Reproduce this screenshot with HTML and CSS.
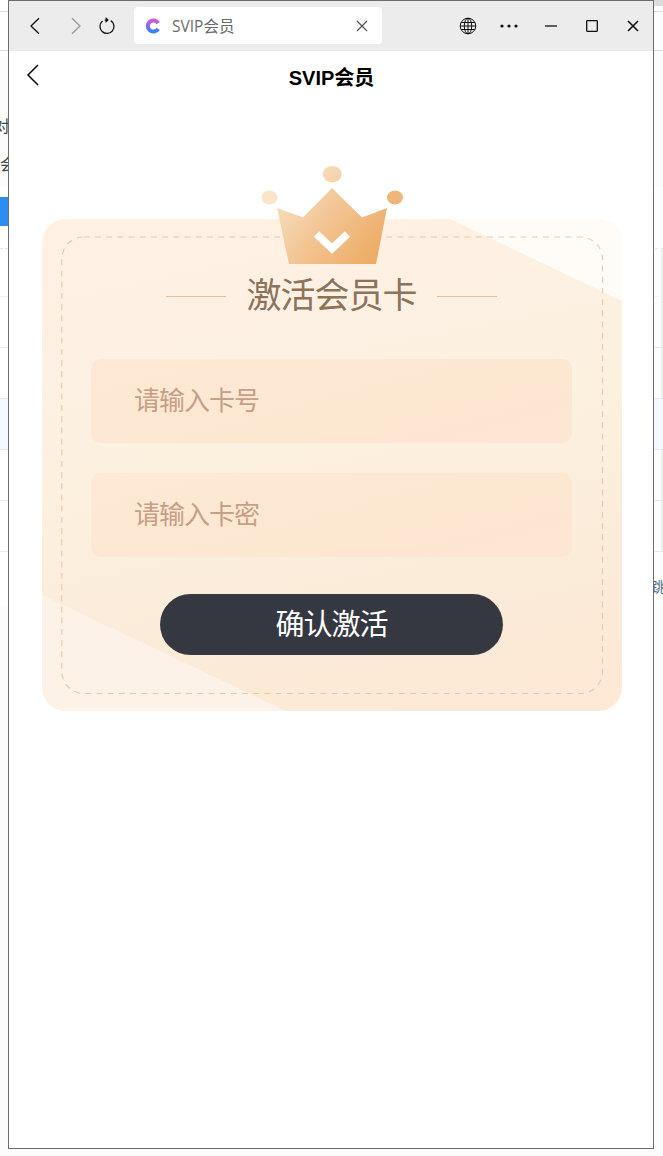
FILE: index.html
```
<!DOCTYPE html>
<html lang="zh-CN">
<head>
    <meta charset="UTF-8">
    <title>SVIP会员</title>
    <link rel="stylesheet" href="styles.css">
</head>
<body>
    <!-- Page behind the window -->
    <div class="backdrop">
        <div class="back-tabs"><span></span></div>
        <div class="back-nav"></div>
        <div class="back-info">
            <p class="cut">对</p>
            <p>会</p>
        </div>
        <div class="back-action"><span></span></div>
        <div class="back-table">
            <div class="back-row first"></div>
            <div class="back-row"></div>
            <div class="back-row"></div>
            <div class="back-row active"></div>
            <div class="back-row"></div>
            <div class="back-row"></div>
        </div>
        <div class="back-pager">跳</div>
    </div>

    <div class="window">
        <header class="toolbar">
            <svg class="nav-icon back" width="12" height="18" viewBox="0 0 12 18"><path d="M10 1.3 2 9l8 7.7"/></svg>
            <svg class="nav-icon forward" width="12" height="18" viewBox="0 0 12 18"><path d="M2 1.3 10 9l-8 7.7"/></svg>
            <svg class="nav-icon reload" width="18" height="20" viewBox="0 0 18 20">
                <path d="M4.5 5.1A7 7 0 1 0 12.8 4.6M9 4.1H6.7"/>
                <path class="fill" d="M7.6 1 10.8 4 7.6 7z"/>
            </svg>
            <div class="tab">
                <svg class="logo" width="16" height="18" viewBox="0 0 16 18">
                    <defs>
                        <linearGradient id="logo" x1="0" y1="0" x2="0" y2="1">
                            <stop offset="0" stop-color="#cf58d8"/>
                            <stop offset=".5" stop-color="#8b68ef"/>
                            <stop offset="1" stop-color="#3483fa"/>
                        </linearGradient>
                    </defs>
                    <path d="M13.2 6.1A5.6 5.6 0 1 0 13.2 11.9" fill="none" stroke="url(#logo)" stroke-width="4"/>
                </svg>
                <span class="tab-title">SVIP会员</span>
                <svg class="tab-close" width="12" height="12" viewBox="0 0 12 12"><path d="M1 1l10 10M11 1 1 11"/></svg>
            </div>
            <div class="controls">
                <svg class="globe" width="18" height="18" viewBox="0 0 18 18">
                    <circle cx="9" cy="9" r="7.8"/>
                    <ellipse cx="9" cy="9" rx="3.7" ry="7.8"/>
                    <path d="M9 1v16M1 9h16M2.3 5.5h13.4M2.3 12.5h13.4"/>
                </svg>
                <svg class="dots" width="18" height="18" viewBox="0 0 18 18"><circle cx="2" cy="9" r="1.6"/><circle cx="9" cy="9" r="1.6"/><circle cx="16" cy="9" r="1.6"/></svg>
                <svg width="18" height="18" viewBox="0 0 18 18"><path d="M3 9h12"/></svg>
                <svg width="18" height="18" viewBox="0 0 18 18"><rect x="3.7" y="3.7" width="10.6" height="10.6" rx=".5"/></svg>
                <svg class="close" width="18" height="18" viewBox="0 0 18 18"><path d="M4 4l10 10M14 4 4 14"/></svg>
            </div>
        </header>

        <div class="page-head">
            <svg width="14" height="22" viewBox="0 0 14 22"><path d="M12 1 2 11l10 10"/></svg>
            <h1>SVIP会员</h1>
        </div>

        <main class="card">
            <svg class="card-bg" width="580" height="492" viewBox="0 0 580 492">
                <defs>
                    <linearGradient id="card" x1="0.38" y1="0" x2="0.62" y2="1">
                        <stop offset="0" stop-color="#fff1e4"/>
                        <stop offset=".22" stop-color="#fdf1e3"/>
                        <stop offset=".46" stop-color="#fcf0df"/>
                        <stop offset=".8" stop-color="#fbebd9"/>
                        <stop offset="1" stop-color="#fde9d5"/>
                    </linearGradient>
                </defs>
                <rect width="580" height="492" fill="url(#card)"/>
                <path d="M408 0H580V82z" fill="#fffcf7"/>
                <path d="M0 376 244 492H0z" fill="#fcf2e8"/>
                <rect x="19.8" y="18" width="540.7" height="456.5" rx="22" fill="none" stroke="#ecc8a7" stroke-width="1.1" stroke-dasharray="5.9 5.3"/>
            </svg>
            <svg class="crown" width="144" height="100" viewBox="0 0 144 100">
                <defs>
                    <linearGradient id="crown" gradientUnits="userSpaceOnUse" x1="18" y1="27" x2="112" y2="98">
                        <stop offset="0" stop-color="#f8e0c1"/>
                        <stop offset=".5" stop-color="#f2c390"/>
                        <stop offset="1" stop-color="#edab63"/>
                    </linearGradient>
                    <linearGradient id="pearl" x1="0" y1="0" x2="1" y2="1">
                        <stop offset="0" stop-color="#f7dfc0"/>
                        <stop offset="1" stop-color="#f3cda1"/>
                    </linearGradient>
                </defs>
                <path d="M16 43 42 52.5 71 23l30 29.5L126 43 115 99H28z" fill="url(#crown)"/>
                <ellipse cx="8.5" cy="32.5" rx="8" ry="7" fill="#f9e5ca"/>
                <ellipse cx="71.2" cy="9.2" rx="9.4" ry="8.3" fill="url(#pearl)"/>
                <ellipse cx="134" cy="32.5" rx="8" ry="7" fill="#f0b679"/>
                <path d="M55.5 69 71 83.5 86.5 69" fill="none" stroke="#fff" stroke-width="7.5"/>
            </svg>

            <form class="form">
                <h2><span>激活会员卡</span></h2>
                <input type="text" placeholder="请输入卡号">
                <input type="text" placeholder="请输入卡密">
                <button type="button">确认激活</button>
            </form>
        </main>
    </div>
</body>
</html>
```

FILE: styles.css
```
* {
    box-sizing: border-box;
}

body {
    margin: 0;
    height: 1156px;
    position: relative;
    overflow: hidden;
    background: #fcfcfc;
    font-family: "Liberation Sans", "Noto Sans CJK SC", sans-serif;
}

svg {
    flex-shrink: 0;
}

/* Page behind the window */
.backdrop {
    display: flex;
    flex-direction: column;
    font-family: "Noto Sans CJK SC", sans-serif;
}

.back-tabs {
    display: flex;
    justify-content: flex-end;
    height: 12px;
    background: #fff;
    border-bottom: 1px solid #dcdcdc;
}

.back-tabs span {
    width: 10px;
    height: 6px;
    background: #dcdcde;
}

.back-nav {
    height: 39px;
    background: #fff;
    border-bottom: 1px solid #dcdcdc;
}

.back-info {
    height: 136px;
    padding-top: 62px;
    font-size: 16px;
    line-height: 24px;
    color: #444;
}

.back-info p {
    margin: 0 0 14px;
}

.back-info .cut {
    text-indent: -6px;
}

.back-action {
    height: 62px;
    padding-top: 10px;
    background: #fff;
    border-bottom: 1px dashed #e8e8e8;
}

.back-action span {
    display: block;
    width: 60px;
    height: 29px;
    background: #2d8cf0;
}

.back-table {
    background: #fff;
    box-shadow: inset -2px 0 2px #f0f0f0;
}

.back-row {
    height: 51px;
    border-bottom: 1px solid #e8eaec;
}

.back-row.first {
    height: 48px;
    border-color: #f3f3f3;
}

.back-row.active {
    background: #f3f9ff;
}

.back-pager {
    height: 55px;
    padding-left: 651px;
    background: #fff;
    color: #526b88;
    font-size: 14px;
    line-height: 68px;
    white-space: nowrap;
}

/* Window */
.window {
    position: absolute;
    top: 0;
    left: 8px;
    width: 646px;
    height: 1149px;
    border: 1px solid #6d6b6b;
    background: #fff;
}

.toolbar {
    display: flex;
    align-items: center;
    height: 50px;
    padding-left: 20px;
    background: #ececec;
}

.toolbar svg,
.page-head svg {
    fill: none;
    stroke: #111;
    stroke-width: 1.3;
}

.toolbar .forward {
    margin-left: 29px;
    stroke: #999;
}

.toolbar .reload {
    margin-left: 16px;
}

.reload .fill {
    fill: #111;
    stroke: none;
}

.tab {
    display: flex;
    align-items: center;
    width: 248px;
    height: 37px;
    margin: -1px 0 0 18px;
    padding: 0 14px 0 11px;
    border-radius: 4px;
    background: #fff;
}

.tab-title {
    margin-left: 11px;
    font-family: "Open Sans", "Noto Sans CJK SC", sans-serif;
    font-size: 15.5px;
    line-height: 22px;
    color: #6b6b6b;
}

.toolbar .tab-close {
    margin-top: 1px;
    margin-left: auto;
    stroke: #555;
}

.controls {
    display: flex;
    gap: 23.3px;
    margin-left: 77px;
}

.toolbar .globe {
    stroke-width: 1;
}

.toolbar .dots {
    fill: #111;
    stroke: none;
}

.toolbar .close {
    stroke-width: 1.6;
}

.page-head {
    display: flex;
    align-items: center;
    height: 54px;
    padding: 0 30px 0 17px;
}

.page-head svg {
    margin-top: -6px;
    stroke: #000;
    stroke-width: 1.5;
}

.page-head h1 {
    flex: 1;
    margin: -3px 0 0;
    font-size: 20px;
    text-align: center;
    color: #000;
}

/* Activation card */
.card {
    position: relative;
    width: 580px;
    height: 492px;
    margin: 114px 0 0 33px;
}

.card-bg {
    position: absolute;
    top: 0;
    left: 0;
    border-radius: 24px;
}

.crown {
    position: absolute;
    top: -54px;
    left: 219px;
}

.form {
    position: relative;
    display: flex;
    flex-direction: column;
    align-items: center;
    padding: 51px 1px 0 0;
}

.form h2 {
    display: flex;
    align-items: center;
    gap: 20px;
    height: 52px;
    margin: 0 0 37px;
    font-size: 35px;
    font-weight: normal;
    letter-spacing: -1px;
    color: #8c735a;
}

.form h2 span {
    margin-top: -7px;
}

.form h2::before,
.form h2::after {
    content: "";
    width: 60px;
    height: 1px;
    background: #e8bf9b;
}

.form input {
    width: 481px;
    height: 84px;
    margin-bottom: 30px;
    padding: 0 43px;
    border: none;
    border-radius: 10px;
    background: linear-gradient(165deg, #fde9d5, #fce7d1 60%, #fde6d2);
    font-family: inherit;
    font-size: 26px;
    letter-spacing: -1px;
}

.form input::placeholder {
    color: #c79f88;
}

.form button {
    width: 343px;
    height: 61px;
    margin-top: 7px;
    padding: 0 6px 5px;
    border: none;
    border-radius: 31px;
    background: #363841;
    color: #fff;
    font-family: inherit;
    font-size: 29px;
    letter-spacing: -1px;
}
```
